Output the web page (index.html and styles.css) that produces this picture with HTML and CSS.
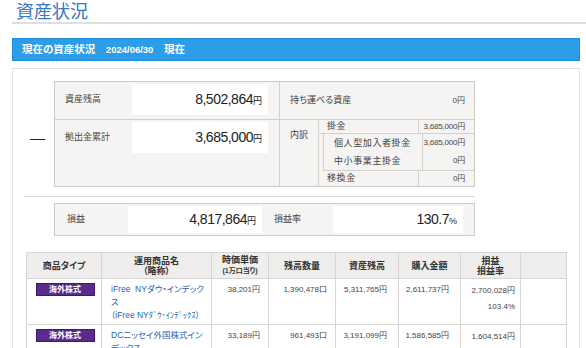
FILE: index.html
```html
<!DOCTYPE html>
<html lang="ja">
<head>
  <meta charset="UTF-8" />
  <title>資産状況</title>
  <link rel="stylesheet" href="styles.css">
</head>
<body>
  <h1 class="title">資産状況</h1>
  <div class="status-bar">現在の資産状況　<span class="date">2024/06/30</span>　現在</div>

  <div class="panel">
    <div class="calc">
      <div class="calc-row">
        <div class="op">—</div>
        <div class="box">
          <div class="main-left">
            <div class="line">
              <span class="label">資産残高</span>
              <div class="amount">8,502,864<small>円</small></div>
            </div>
            <div class="line line-tall">
              <span class="label">拠出金累計</span>
              <div class="amount">3,685,000<small>円</small></div>
            </div>
          </div>
          <div class="main-right">
            <div class="portable">
              <span>持ち運べる資産</span>
              <span class="yen">0円</span>
            </div>
            <div class="breakdown">
              <div class="bd-title">内訳</div>
              <div class="bd-list">
                <div class="bd-row bd-first">
                  <span class="bd-name">掛金</span>
                  <span class="bd-amt">3,685,000円</span>
                </div>
                <div class="bd-group">
                  <div class="bd-row">
                    <span class="bd-name">個人型加入者掛金</span>
                    <span class="bd-amt">3,685,000円</span>
                  </div>
                  <div class="bd-row">
                    <span class="bd-name">中小事業主掛金</span>
                    <span class="bd-amt">0円</span>
                  </div>
                </div>
                <div class="bd-row bd-last">
                  <span class="bd-name">移換金</span>
                  <span class="bd-amt">0円</span>
                </div>
              </div>
            </div>
          </div>
        </div>
      </div>

      <div class="calc-sep"></div>

      <div class="calc-row">
        <div class="op op-empty"></div>
        <div class="box box-total">
          <span class="total-label">損益</span>
          <div class="total-val">4,817,864<small>円</small></div>
          <span class="total-label">損益率</span>
          <div class="total-val total-rate">130.7<small>%</small></div>
        </div>
      </div>
    </div>

    <table class="holdings">
      <colgroup>
        <col style="width:75px"><col style="width:110px"><col style="width:57px"><col style="width:67px">
        <col style="width:63px"><col style="width:62px"><col style="width:60px"><col style="width:46px">
      </colgroup>
      <thead>
        <tr>
          <th>商品タイプ</th>
          <th>運用商品名<br>（略称）</th>
          <th>時価単価<br><span class="sub">(1万口当り)</span></th>
          <th>残高数量</th>
          <th>資産残高</th>
          <th>購入金額</th>
          <th>損益<br>損益率</th>
          <th></th>
        </tr>
      </thead>
      <tbody>
        <tr>
          <td class="type"><span class="badge">海外株式</span></td>
          <td class="name"><a href="#">iFree&nbsp; NYダウ・インデックス<br><span class="abbr">（iFree NYﾀﾞｳ･ｲﾝﾃﾞｯｸｽ）</span></a></td>
          <td>38,201円</td>
          <td>1,390,478口</td>
          <td class="mid">5,311,765円</td>
          <td class="mid">2,611,737円</td>
          <td class="pl">2,700,028円<br>103.4%</td>
          <td></td>
        </tr>
        <tr>
          <td class="type"><span class="badge">海外株式</span></td>
          <td class="name"><a href="#">DCニッセイ外国株式インデックス</a></td>
          <td>33,189円</td>
          <td>961,493口</td>
          <td class="mid">3,191,099円</td>
          <td class="mid">1,586,585円</td>
          <td class="pl">1,604,514円<br>101.1%</td>
          <td></td>
        </tr>
      </tbody>
    </table>
  </div>
</body>
</html>
```

FILE: styles.css
```css
* {
  box-sizing: border-box;
}
body {
  margin: 0;
  font-family: "Liberation Sans", "Noto Sans CJK JP", sans-serif;
  font-feature-settings: "palt";
  color: #333;
  background: #fff;
}
.title {
  margin: 0 0 0 12px;
  padding: 0 0 2px 4px;
  font-family: "Noto Sans CJK JP", sans-serif;
  font-size: 18px;
  line-height: 20px;
  font-weight: normal;
  color: #3878c0;
  border-bottom: 2px solid #dedede;
}
.status-bar {
  margin: 14px 6px 0 12px;
  height: 23px;
  padding-left: 9px;
  background: #2e9de8;
  border: 1px solid #1d8fdd;
  color: #fff;
  font-size: 10.5px;
  font-weight: bold;
  line-height: 21px;
}
.status-bar .date {
  font-size: 9.5px;
}
.panel {
  margin: 7px 6px 0 12px;
  padding: 12px 0 20px;
  border: 1px solid #e2e2e2;
  border-bottom: 0;
}

/* calculation boxes */
.calc {
  margin-left: 11px;
  width: 451px;
}
.calc-row {
  display: flex;
}
.op {
  width: 30px;
  padding: 48px 0 0 6px;
  font-size: 15px;
  line-height: 18px;
  color: #222;
}
.op-empty {
  padding: 0;
}
.calc-sep {
  height: 1px;
  margin: 9px 0 6px;
  background: #d9d9d9;
}
.box {
  display: flex;
  width: 421px;
  background: #f5f4f2;
  border: 1px solid #cdcbc8;
  font-size: 9px;
  color: #444;
}
.main-left {
  width: 225px;
  border-right: 1px solid #d3d1ce;
}
.line {
  display: flex;
  height: 38px;
  padding-top: 2px;
  border-bottom: 1px solid #d3d1ce;
}
.line-tall {
  height: 66px;
  border-bottom: 0;
}
.label {
  width: 77px;
  padding-left: 10px;
  line-height: 31px;
}
.amount,
.total-val {
  width: 136px;
  height: 31px;
  padding-right: 6px;
  background: #fff;
  text-align: right;
  font-size: 14px;
  line-height: 31px;
  letter-spacing: -0.5px;
  color: #222;
}
.amount small,
.total-val small {
  font-size: 9px;
  letter-spacing: 0;
}
.main-right {
  flex: 1;
}
.portable {
  display: flex;
  justify-content: space-between;
  height: 38px;
  padding: 0 9px 0 10px;
  line-height: 37px;
  border-bottom: 1px solid #d3d1ce;
}
.yen {
  font-size: 8px;
}
.breakdown {
  display: flex;
  height: 66px;
}
.bd-title {
  width: 38px;
  padding: 8px 0 0 10px;
  line-height: 14px;
}
.bd-list {
  flex: 1;
  border-left: 1px solid #d3d1ce;
}
.bd-row {
  display: flex;
  height: 18px;
  line-height: 18px;
}
.bd-first {
  height: 14px;
  line-height: 13px;
  border-bottom: 1px solid #d3d1ce;
}
.bd-last {
  height: 15px;
  line-height: 15px;
}
.bd-group {
  margin-left: 4px;
  border-left: 1px solid #d3d1ce;
  border-bottom: 1px solid #d3d1ce;
}
.bd-name {
  flex: 1;
  padding-left: 8px;
  letter-spacing: 0.6px;
}
.bd-group .bd-name {
  padding-left: 10px;
}
.bd-amt {
  width: 56px;
  padding-right: 9px;
  border-left: 1px solid #d3d1ce;
  text-align: right;
  font-size: 8px;
  letter-spacing: -0.2px;
}
.bd-group .bd-amt {
  width: 52px;
}

.box-total {
  height: 33px;
  padding: 2px 11px 0 0;
}
.total-label {
  width: 73px;
  padding-left: 12px;
  line-height: 27px;
}
.total-label + .total-val + .total-label {
  width: 71px;
}
.total-val {
  width: 134px;
  height: 27px;
  line-height: 27px;
}
.total-rate {
  width: 130px;
}

/* holdings table */
.holdings {
  margin: 16px 0 0 13px;
  width: 540px;
  table-layout: fixed;
  border-collapse: collapse;
  border: 1px solid #c9c9c9;
}
.holdings th {
  height: 26px;
  padding: 0;
  background: #efeeec;
  border: 1px solid #d5d5d5;
  font-size: 9px;
  line-height: 10px;
  font-weight: bold;
  color: #333;
  vertical-align: middle;
}
.holdings th .sub {
  font-size: 7px;
}
.holdings td {
  padding: 4px 3px 2px;
  border: 1px solid #d5d5d5;
  font-size: 8px;
  line-height: 13px;
  text-align: right;
  vertical-align: top;
  color: #444;
}
.holdings td:nth-child(3),
.holdings td:nth-child(4) {
  padding-right: 8px;
}
.holdings td.type {
  padding: 4px 0 0;
  text-align: center;
}
.badge {
  display: inline-block;
  width: 59px;
  height: 13px;
  margin-left: 2px;
  background: #5b2b8c;
  border: 1px solid #3f1670;
  color: #fff;
  font-size: 8px;
  font-weight: bold;
  line-height: 11px;
  text-align: center;
}
.holdings td.name {
  padding: 4px 4px 2px 9px;
  text-align: left;
  font-size: 8.5px;
}
.name a {
  color: #2c62b4;
  text-decoration: none;
}
.name .abbr {
  white-space: nowrap;
}
.holdings td.mid {
  padding-right: 11px;
}
.holdings td.pl {
  padding-right: 5px;
  line-height: 16px;
}
```
